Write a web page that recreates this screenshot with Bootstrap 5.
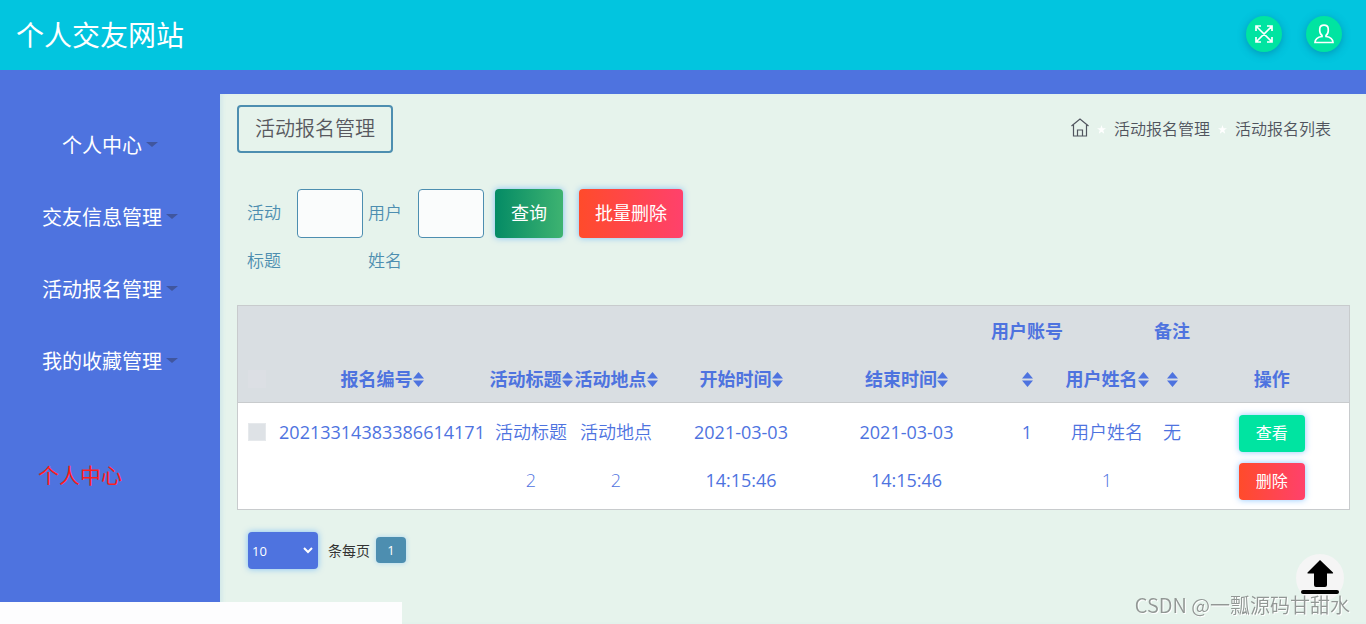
<!DOCTYPE html>
<html lang="zh-CN">
<head>
<meta charset="utf-8">
<meta name="viewport" content="width=device-width, initial-scale=1">
<title>个人交友网站</title>
<link rel="stylesheet" href="https://cdn.jsdelivr.net/npm/bootstrap@5.3.0/dist/css/bootstrap.min.css">
<style>
:root { --brand: #4e73df; --steel: #4d8eb0; --mint: #00e4a1; --glow: 0 0 6px rgba(30, 144, 255, .5); }
html, body { height: 100%; }
body { font-family: "Open Sans", "Noto Sans CJK SC", sans-serif; background: var(--brand); overflow: hidden; }
.thin { font-weight: 350; }
.topbar { height: 70px; background: #02c5df; padding: 0 24px 2px 16px; }
.topbar h1 { font-size: 28px; line-height: 68px; font-weight: 400; padding-top: 2px; }
.round-btn { width: 36px; height: 36px; background: var(--mint); box-shadow: 0 2px 8px rgba(0, 70, 110, .35); }
.side { width: 220px; padding-top: 40px; }
.side a { font-size: 20px; line-height: 72px; font-weight: 400; }
.side a.current { font-size: 21px; color: #ff1d1d; margin-top: 41px; padding-left: 38px; }
.tri { width: 0; height: 0; border: 6px solid transparent; border-top: 5px solid #40569f; border-bottom: 0; margin-bottom: 3px; }
.panel { background: #e6f3ec; margin-top: 24px; padding: 11px 16px 0 17px; box-shadow: inset 4px 0 4px -2px rgba(78, 160, 223, .15); }
.page-name { border: 2px solid var(--steel); border-radius: 4px; font-size: 20px; line-height: 44px; padding: 0 16px; color: #58595f; font-weight: 350; }
.crumbs { font-size: 16px; line-height: 48px; padding-right: 19px; }
.crumbs, .crumbs a { color: #50545e; }
.search { padding-left: 10px; margin-top: 36px; }
.search label { width: 34px; font-size: 17px; line-height: 48px; color: var(--steel); }
.search .second { margin-left: 5px; }
.search input { width: 66px; height: 49px; border: 1px solid var(--steel); border-radius: 4px; background: #fafcfc; }
.search-actions { margin-left: 11px; }
.glow-btn { border: 0; border-radius: 4px; color: #fff; box-shadow: var(--glow); }
.go { background: linear-gradient(90deg, #048b65, #3eb371); }
.danger { background: linear-gradient(90deg, #ff4b2b, #ff416c); }
.tall { height: 49px; font-size: 18px; padding: 0 16px; }
.short { height: 37px; font-size: 16px; padding: 0 17px; line-height: 37px; }
.view { background: var(--mint); }
.grid-table { table-layout: fixed; width: 100%; margin-top: 20px; border: 1px solid #c8cbcd; color: var(--brand); font-size: 18px; line-height: 48px; text-align: center; background: #fff; }
.grid-table thead { background: #d9dee2; }
.grid-table th { padding: 1px 0 0; vertical-align: bottom; font-weight: 700; box-shadow: inset 0 -1px #c8cbcd; }
.grid-table td { padding: 5px 3px; vertical-align: top; font-weight: 350; }
.grid-table td.num { font-weight: 400; padding: 5px 2px; }
.grid-table input { appearance: none; width: 18px; height: 18px; background: #dee2e6; border: 1px solid #e6e9ec; vertical-align: -2px; margin: 0; }
.grid-table th input { background: #dcdfe4; border-color: #dcdfe4; }
.sort { vertical-align: -1px; width: 11px; }
.pager { padding: 22px 0 0 11px; font-size: 14px; color: #333; }
.pager select { appearance: none; width: 70px; height: 37px; font-size: 13px; padding: 2px 4px 0; background: var(--brand); }
.pager .chev { right: 5px; top: 15px; pointer-events: none; }
.pager label { margin-left: 10px; }
.pager a { width: 30px; height: 26px; line-height: 26px; margin: 0 0 2px 6px; font-size: 13px; background: var(--steel); color: #fff; border-radius: 4px; box-shadow: 0 0 5px rgba(30, 144, 255, .3); }
.status { width: 402px; height: 22px; background: #fdfdfe; }
.to-top { right: 22px; bottom: 22px; width: 48px; height: 48px; background: #f5f5f5; }
.credit { right: 16px; bottom: 4px; font-size: 20px; line-height: 30px; color: #929795; font-family: "Noto Sans CJK SC", sans-serif; font-weight: 350; text-shadow: 1px 1px 0 #fff; }
</style>
</head>
<body class="d-flex flex-column">
<svg class="d-none" aria-hidden="true">
  <symbol id="i-sort" viewBox="0 0 12 15" preserveAspectRatio="none"><path d="M6 0 12 6.500H0zM6 15 0 8.500h12z" fill="currentColor"/></symbol>
  <symbol id="i-star" viewBox="0 0 10 10"><path d="M5 0 6.200 3.500 10 3.600 7 5.900 8 9.700 5 7.500 2 9.700 3 5.900 0 3.600 3.800 3.500z" fill="#fff"/></symbol>
</svg>

<header class="topbar d-flex align-items-center justify-content-between">
  <h1 class="text-white m-0">个人交友网站</h1>
  <div class="d-flex gap-4">
    <button class="round-btn btn border-0 rounded-circle p-0 d-flex align-items-center justify-content-center" aria-label="全屏">
      <svg width="18" height="18" viewBox="0 0 18 18" fill="none" stroke="#fff" stroke-width="1.700"><path d="M1 1 17 17M17 1 1 17M1 6V1h5M12 1h5v5M17 12v5h-5M6 17H1v-5"/></svg>
    </button>
    <button class="round-btn btn border-0 rounded-circle p-0 d-flex align-items-center justify-content-center" aria-label="用户">
      <svg width="20" height="20" viewBox="0 0 20 20" fill="none" stroke="#fff" stroke-width="1.700"><path d="M8 11.500C5.700 9.500 5.500 7 5.800 4.500 6 2.200 7.500 1.200 10 1.200s4 1 4.200 3.300c.3 2.500.1 5-2.200 7v1c4 .5 6.800 2.300 7 6H1c.2-3.700 3-5.500 7-6z"/></svg>
    </button>
  </div>
</header>

<div class="d-flex flex-grow-1">
  <nav class="side flex-shrink-0 d-flex flex-column">
    <a href="#" class="text-white text-decoration-none d-flex justify-content-center align-items-center">个人中心<span class="tri ms-1"></span></a>
    <a href="#" class="text-white text-decoration-none d-flex justify-content-center align-items-center">交友信息管理<span class="tri ms-1"></span></a>
    <a href="#" class="text-white text-decoration-none d-flex justify-content-center align-items-center">活动报名管理<span class="tri ms-1"></span></a>
    <a href="#" class="text-white text-decoration-none d-flex justify-content-center align-items-center">我的收藏管理<span class="tri ms-1"></span></a>
    <a href="#" class="current text-decoration-none">个人中心</a>
  </nav>

  <main class="panel flex-grow-1">
    <div class="d-flex justify-content-between">
      <h2 class="page-name m-0">活动报名管理</h2>
      <div class="crumbs thin d-flex align-items-center">
        <a href="#" aria-label="首页" class="d-flex pb-1"><svg width="18" height="20" viewBox="0 0 18 20" fill="none" stroke="currentColor" stroke-width="1.200"><path d="M.5 9 9 2 17.500 9M2.500 8v11h13V8M6.500 19v-6h5v6"/></svg></a>
        <svg width="9" height="9" class="mx-2 flex-shrink-0"><use href="#i-star"/></svg>
        <a href="#" class="text-decoration-none">活动报名管理</a>
        <svg width="9" height="9" class="mx-2 flex-shrink-0"><use href="#i-star"/></svg>
        <span>活动报名列表</span>
      </div>
    </div>

    <form class="search d-flex align-items-start">
      <label for="title" class="thin me-3">活动标题</label>
      <input id="title" type="text">
      <label for="user" class="second thin me-3">用户姓名</label>
      <input id="user" type="text">
      <div class="search-actions d-flex gap-3">
        <button type="button" class="glow-btn go tall">查询</button>
        <button type="button" class="glow-btn danger tall">批量删除</button>
      </div>
    </form>

    <table class="grid-table">
      <colgroup>
        <col style="width:38px"><col style="width:213px"><col style="width:85px"><col style="width:85px"><col style="width:165px"><col style="width:166px"><col style="width:75px"><col style="width:85px"><col style="width:45px"><col style="width:155px">
      </colgroup>
      <thead>
        <tr>
          <th><input type="checkbox" aria-label="全选"></th>
          <th>报名编号<svg class="sort" height="15"><use href="#i-sort"/></svg></th>
          <th>活动标题<svg class="sort" height="15"><use href="#i-sort"/></svg></th>
          <th>活动地点<svg class="sort" height="15"><use href="#i-sort"/></svg></th>
          <th>开始时间<svg class="sort" height="15"><use href="#i-sort"/></svg></th>
          <th>结束时间<svg class="sort" height="15"><use href="#i-sort"/></svg></th>
          <th>用户账号<svg class="sort" height="15"><use href="#i-sort"/></svg></th>
          <th>用户姓名<svg class="sort" height="15"><use href="#i-sort"/></svg></th>
          <th>备注<svg class="sort" height="15"><use href="#i-sort"/></svg></th>
          <th>操作</th>
        </tr>
      </thead>
      <tbody>
        <tr>
          <td><input type="checkbox" aria-label="选择此行"></td>
          <td class="num">20213314383386614171</td>
          <td>活动标题2</td>
          <td>活动地点2</td>
          <td class="num">2021-03-03 14:15:46</td>
          <td class="num">2021-03-03 14:15:46</td>
          <td class="num">1</td>
          <td>用户姓名1</td>
          <td>无</td>
          <td><button type="button" class="glow-btn view short">查看</button><br><button type="button" class="glow-btn danger short">删除</button></td>
        </tr>
      </tbody>
    </table>

    <div class="pager d-flex align-items-center">
      <div class="position-relative">
        <select id="size" class="glow-btn d-block"><option>10</option><option>25</option><option>50</option></select>
        <svg class="chev position-absolute" width="10" height="7" viewBox="0 0 10 7" fill="none" stroke="#fff" stroke-width="2"><path d="M1 1l4 4 4-4"/></svg>
      </div>
      <label for="size">条每页</label>
      <a href="#" class="text-center text-decoration-none">1</a>
    </div>
  </main>
</div>

<button type="button" class="to-top btn border-0 rounded-circle p-0 position-fixed" aria-label="返回顶部">
  <svg class="d-block" width="48" height="48" viewBox="0 0 48 48"><path d="M24 6 37 18.500q.5 1-.5 1H31V31q0 2-2 2H20q-2 0-2-2V19.500h-6q-1 0-.5-1z"/><rect x="5" y="36" width="38" height="4" rx="2"/></svg>
</button>
<div class="status position-fixed bottom-0 start-0"></div>
<div class="credit position-fixed">CSDN @一瓢源码甘甜水</div>
<script src="https://cdn.jsdelivr.net/npm/bootstrap@5.3.0/dist/js/bootstrap.bundle.min.js"></script>
</body>
</html>
